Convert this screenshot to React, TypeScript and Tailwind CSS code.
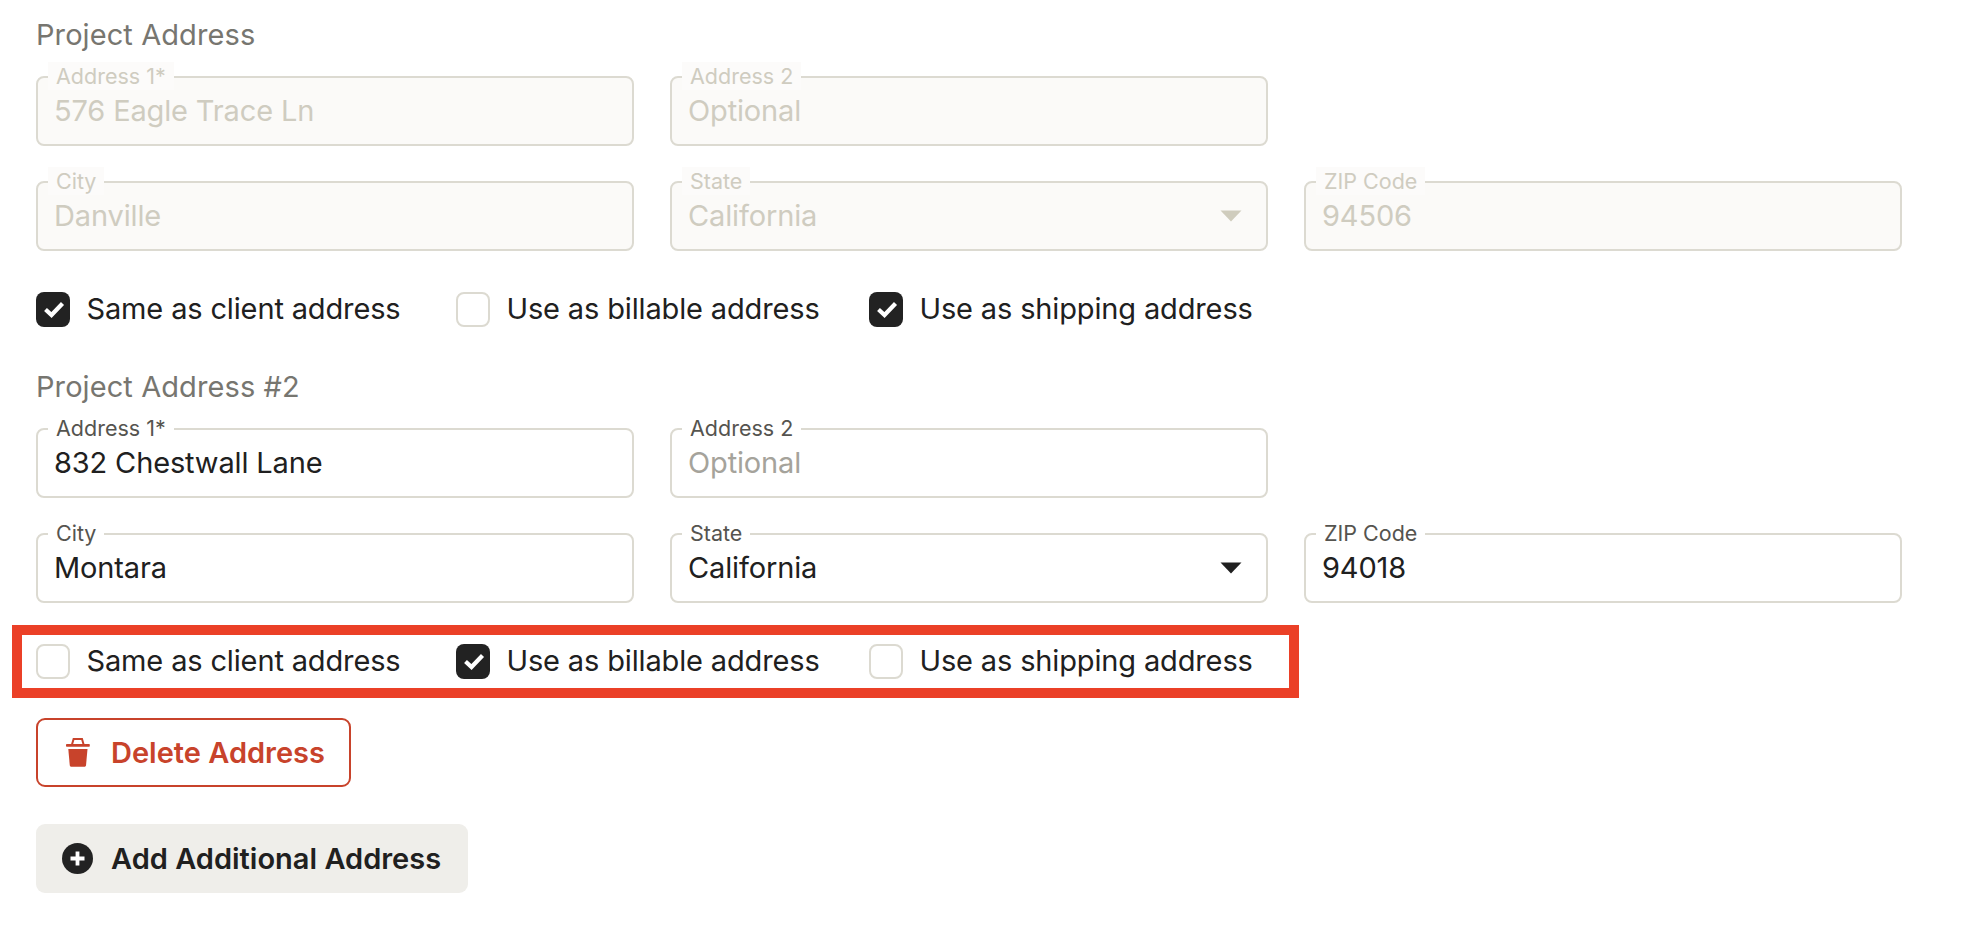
const fontStack = "font-['Inter','Noto_Sans',sans-serif]";

type FieldProps = {
  label: string;
  value: string;
  disabled?: boolean;
  placeholder?: boolean;
  select?: boolean;
};

function Field({ label, value, disabled, placeholder, select }: FieldProps) {
  let textColor = "text-[#202020]";
  if (placeholder) textColor = "text-[#a5a39b]";
  if (disabled) textColor = "text-[#cfccc0]";

  return (
    <div
      className={`relative flex h-[70px] items-center justify-between rounded-[8px] border-2 border-[#dcdad1] pl-[16px] pr-[24px] ${
        disabled ? "bg-[#fbfaf8]" : "bg-white"
      }`}
    >
      <span
        className={`absolute left-[10px] top-[-16px] px-[8px] text-[21.5px] leading-[28px] ${
          disabled ? "bg-[#fcfbfa] text-[#cfccc0]" : "bg-white text-[#55544f]"
        }`}
      >
        {label}
      </span>
      <span className={`mt-[-1px] text-[29px] leading-[36px] tracking-[-0.005em] ${textColor}`}>{value}</span>
      {select ? (
        <svg width="22" height="12" viewBox="0 0 22 12" className="shrink-0">
          <polygon points="0.5,0.5 21.5,0.5 11,11.5" fill={disabled ? "#cfccbd" : "#202020"} />
        </svg>
      ) : null}
    </div>
  );
}

function Check({ label, checked }: { label: string; checked?: boolean }) {
  return (
    <div className="flex items-center gap-[16.5px]">
      {checked ? (
        <div className="flex h-[35px] w-[34px] items-center justify-center rounded-[8px] bg-[#222222]">
          <svg width="34" height="35" viewBox="0 0 34 35">
            <path d="M9.5 17.5 L15.5 23 L26.5 11.5" fill="none" stroke="#fff" strokeWidth="4.2" />
          </svg>
        </div>
      ) : (
        <div className="h-[35px] w-[34px] rounded-[8px] border-2 border-[#dcdad1] bg-white" />
      )}
      <span className="text-[29px] leading-[36px] tracking-[-0.005em] text-[#202020]">{label}</span>
    </div>
  );
}

function CheckRow({ same, billable, shipping }: { same?: boolean; billable?: boolean; shipping?: boolean }) {
  return (
    <div className="flex">
      <div className="w-[420px]">
        <Check label="Same as client address" checked={same} />
      </div>
      <div className="w-[413px]">
        <Check label="Use as billable address" checked={billable} />
      </div>
      <Check label="Use as shipping address" checked={shipping} />
    </div>
  );
}

function Title({ children }: { children: string }) {
  return <div className="text-[29px] leading-[38px] tracking-[0.003em] text-[#777670]">{children}</div>;
}

export default function App() {
  return (
    <div className={`h-[934px] w-[1962px] overflow-hidden bg-white pl-[36px] pt-[16px] ${fontStack}`}>
      <Title>Project Address</Title>
      <div className="mt-[22px] grid w-[1866px] grid-cols-3 gap-x-[36px] gap-y-[35px]">
        <Field label="Address 1*" value="576 Eagle Trace Ln" disabled />
        <Field label="Address 2" value="Optional" disabled />
        <div />
        <Field label="City" value="Danville" disabled />
        <Field label="State" value="California" disabled select />
        <Field label="ZIP Code" value="94506" disabled />
      </div>
      <div className="mt-[40px]">
        <CheckRow same shipping />
      </div>

      <div className="mt-[41px]">
        <Title>Project Address #2</Title>
      </div>
      <div className="mt-[22px] grid w-[1866px] grid-cols-3 gap-x-[36px] gap-y-[35px]">
        <Field label="Address 1*" value="832 Chestwall Lane" />
        <Field label="Address 2" value="Optional" placeholder />
        <div />
        <Field label="City" value="Montara" />
        <Field label="State" value="California" select />
        <Field label="ZIP Code" value="94018" />
      </div>
      <div className="relative mt-[40px]">
        <CheckRow billable />
        <div className="pointer-events-none absolute left-[-24px] top-[-18px] h-[73px] w-[1287px] border-[10px] border-[#eb4027]" />
      </div>

      <button
        type="button"
        className="mt-[39px] flex h-[69px] w-[315px] items-center rounded-[9px] border-2 border-[#c8432b] bg-white pl-[28px]"
      >
        <svg width="24" height="29" viewBox="0 0 24 29" className="shrink-0">
          <path d="M6 6.5 L7.6 1 H16 L17.6 6.5" fill="none" stroke="#c8432b" strokeWidth="2" />
          <rect x="0" y="6" width="23.8" height="2.8" rx="0.8" fill="#c8432b" />
          <path d="M2.3 11 H21.5 L20 27.6 Q19.9 28.7 18.8 28.7 H5 Q3.9 28.7 3.8 27.6 Z" fill="#c8432b" />
        </svg>
        <span className="ml-[21px] text-[29px] font-semibold leading-[36px] text-[#c8432b]">Delete Address</span>
      </button>

      <button
        type="button"
        className="mt-[37px] flex h-[69px] w-[432px] items-center rounded-[9px] bg-[#efeeea] pl-[26px]"
      >
        <svg width="31" height="31" viewBox="0 0 31 31" className="shrink-0">
          <circle cx="15.5" cy="15.5" r="15.5" fill="#222222" />
          <path d="M15.5 8.5 V22.5 M8.5 15.5 H22.5" stroke="#fff" strokeWidth="3.8" />
        </svg>
        <span className="ml-[18px] text-[29px] font-semibold leading-[36px] text-[#202020]">Add Additional Address</span>
      </button>
    </div>
  );
}
